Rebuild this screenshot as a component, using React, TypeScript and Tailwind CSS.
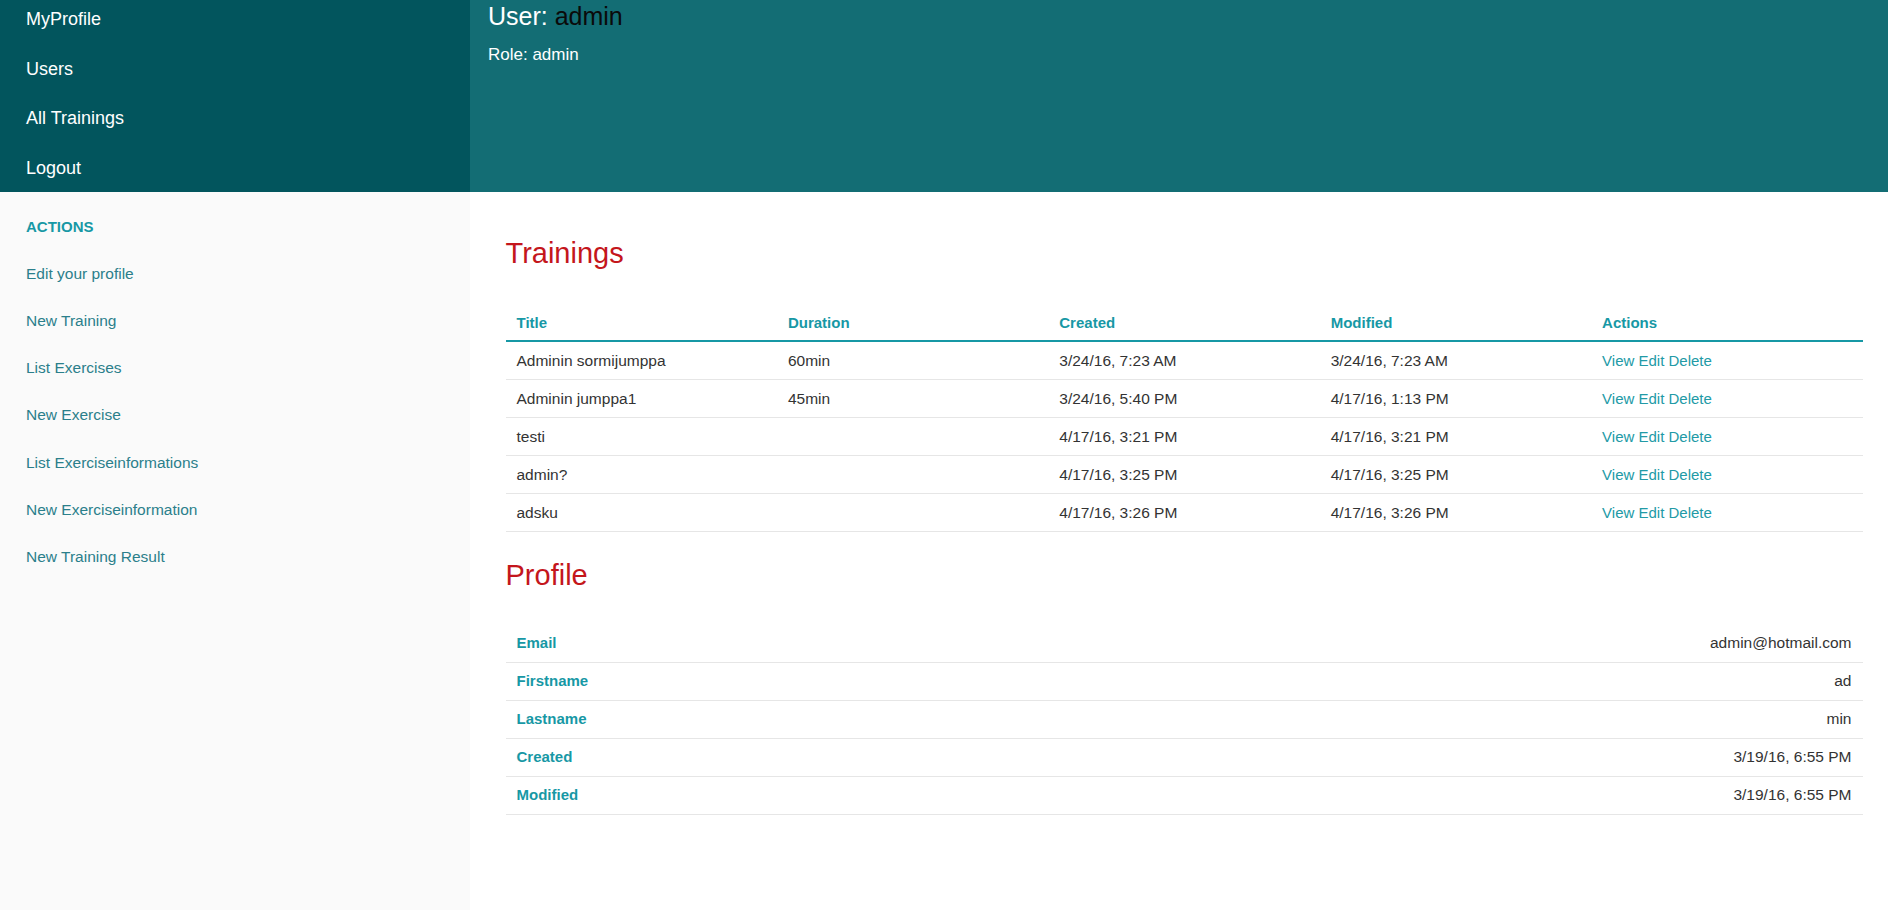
import React from "react";

const topNav = ["MyProfile", "Users", "All Trainings", "Logout"];
const actions = [
  "Edit your profile",
  "New Training",
  "List Exercises",
  "New Exercise",
  "List Exerciseinformations",
  "New Exerciseinformation",
  "New Training Result",
];

const trainings = [
  { title: "Adminin sormijumppa", duration: "60min", created: "3/24/16, 7:23 AM", modified: "3/24/16, 7:23 AM" },
  { title: "Adminin jumppa1", duration: "45min", created: "3/24/16, 5:40 PM", modified: "4/17/16, 1:13 PM" },
  { title: "testi", duration: "", created: "4/17/16, 3:21 PM", modified: "4/17/16, 3:21 PM" },
  { title: "admin?", duration: "", created: "4/17/16, 3:25 PM", modified: "4/17/16, 3:25 PM" },
  { title: "adsku", duration: "", created: "4/17/16, 3:26 PM", modified: "4/17/16, 3:26 PM" },
];

const profile = [
  ["Email", "admin@hotmail.com"],
  ["Firstname", "ad"],
  ["Lastname", "min"],
  ["Created", "3/19/16, 6:55 PM"],
  ["Modified", "3/19/16, 6:55 PM"],
];

export default function App() {
  return (
    <div className="flex min-h-[910px] w-full font-['Liberation_Sans',Arial,sans-serif] text-[#333]">
      <aside className="flex w-[470px] shrink-0 flex-col">
        <nav className="flex h-[192px] flex-col gap-[27.5px] bg-[#02555d] pl-[26px] pt-[8px]">
          {topNav.map((t) => (
            <a key={t} className="text-[18px] leading-[22px] text-white">
              {t}
            </a>
          ))}
        </nav>
        <div className="flex flex-1 flex-col gap-[27.2px] bg-[#fafafa] pl-[26px] pt-[24.7px]">
          <div className="text-[15px] font-bold leading-[20px] text-[#1798a5]">ACTIONS</div>
          {actions.map((a) => (
            <a key={a} className="text-[15.5px] leading-[20px] text-[#2b7f8b]">
              {a}
            </a>
          ))}
        </div>
      </aside>
      <main className="flex min-w-0 flex-1 flex-col">
        <header className="h-[192px] bg-[#136d74] pl-[18px] pt-[1px]">
          <div className="text-[25px] leading-[30px] text-white">
            User: <span className="text-[#0a0a0a]">admin</span>
          </div>
          <div className="mt-[14.4px] text-[17px] leading-[20px] text-white">Role: admin</div>
        </header>
        <div className="pl-[35.5px] pr-[25.5px] pt-[43.8px]">
          <h3 className="text-[29px] leading-[34px] text-[#c4161c]">Trainings</h3>
          <table className="mt-[32.6px] w-full table-fixed border-collapse">
            <thead>
              <tr className="border-b-2 border-[#1798a5]">
                {["Title", "Duration", "Created", "Modified", "Actions"].map((h) => (
                  <th
                    key={h}
                    className="px-[11px] pb-[7.8px] pt-[10.2px] text-left text-[15px] font-bold leading-[20px] text-[#1798a5]"
                  >
                    {h}
                  </th>
                ))}
              </tr>
            </thead>
            <tbody>
              {trainings.map((r) => (
                <tr key={r.title} className="border-b border-[#e6e6e6]">
                  <td className="px-[11px] py-[8.5px] text-[15.5px] leading-[20px]">{r.title}</td>
                  <td className="px-[11px] py-[8.5px] text-[15.5px] leading-[20px]">{r.duration}</td>
                  <td className="px-[11px] py-[8.5px] text-[15.5px] leading-[20px]">{r.created}</td>
                  <td className="px-[11px] py-[8.5px] text-[15.5px] leading-[20px]">{r.modified}</td>
                  <td className="px-[11px] py-[8.5px] text-[15px] leading-[20px] text-[#229aa6]">
                    <a>View</a> <a>Edit</a> <a>Delete</a>
                  </td>
                </tr>
              ))}
            </tbody>
          </table>

          <h3 className="mt-[26px] text-[29px] leading-[34px] text-[#c4161c]">Profile</h3>
          <div className="mt-[32.4px] flex flex-col">
            {profile.map(([k, v]) => (
              <div
                key={k}
                className="flex items-center justify-between border-b border-[#e6e6e6] px-[11px] py-[8.5px] leading-[20px]"
              >
                <span className="text-[15px] font-bold text-[#1798a5]">{k}</span>
                <span className="text-[15.5px] text-[#333]">{v}</span>
              </div>
            ))}
          </div>
        </div>
      </main>
    </div>
  );
}
